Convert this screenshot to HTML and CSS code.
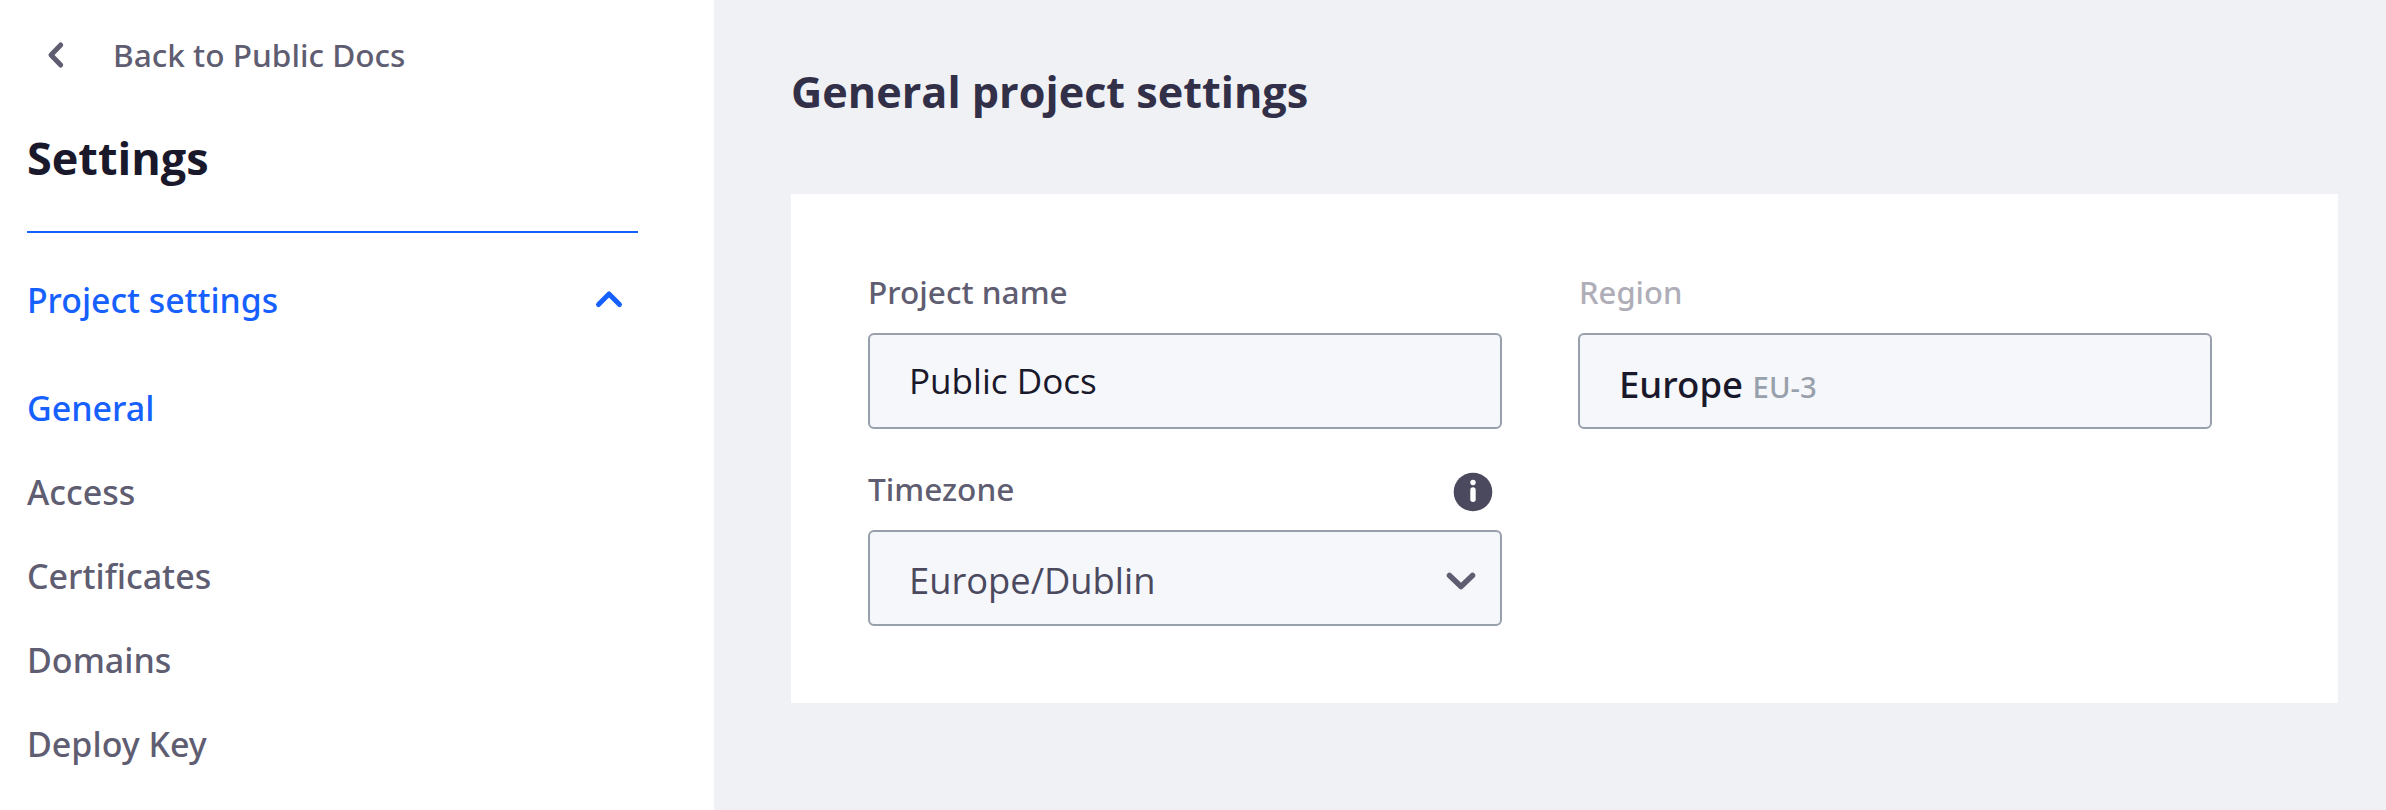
FILE: index.html
```html
<!DOCTYPE html>
<html lang="en">
<head>
<meta charset="utf-8">
<title>General project settings</title>
<link rel="stylesheet" href="styles.css">
</head>
<body>
<div class="layout">
  <aside class="sidebar">
    <a class="back">
      <svg class="back-icon" width="20" height="30" viewBox="0 0 20 30"><path d="M14.700 5 5 15l9.700 10" /></svg>
      <span>Back to Public Docs</span>
    </a>
    <h2 class="sidebar-title">Settings</h2>
    <nav class="nav">
      <div class="nav-group">
        <span>Project settings</span>
        <svg class="group-icon" width="30" height="24" viewBox="0 0 30 24"><path d="M4.500 17.500 15 7l10.500 10.500" /></svg>
      </div>
      <a class="nav-item active">General</a>
      <a class="nav-item">Access</a>
      <a class="nav-item">Certificates</a>
      <a class="nav-item">Domains</a>
      <a class="nav-item">Deploy Key</a>
    </nav>
  </aside>
  <main class="main">
    <h1 class="title">General project settings</h1>
    <section class="card">
      <div class="field">
        <div class="label">Project name</div>
        <div class="box name">Public Docs</div>
      </div>
      <div class="field">
        <div class="label muted">Region</div>
        <div class="box region"><span class="region-text">Europe <small>EU-3</small></span></div>
      </div>
      <div class="field">
        <div class="label">
          <span>Timezone</span>
          <svg class="info" width="40" height="40" viewBox="0 0 40 40"><circle class="disc" cx="20" cy="20" r="19.300"/><circle class="mark" cx="20" cy="10.500" r="2.700"/><path class="stem" d="M20 18v9.300"/></svg>
        </div>
        <div class="box select">
          <span>Europe/Dublin</span>
          <svg class="caret" width="32" height="24" viewBox="0 0 32 24"><path d="M4.500 7.500 16 18.500 27.500 7.500" /></svg>
        </div>
      </div>
    </section>
  </main>
</div>
</body>
</html>
```
FILE: styles.css
```css
* { box-sizing: border-box; }
body {
  margin: 0;
  font-family: "Noto Sans", "Open Sans", sans-serif;
  background: #f0f1f5;
  color: #5f5d71;
}
svg { display: block; fill: none; stroke-linecap: round; stroke-linejoin: round; }
.layout { display: flex; height: 810px; overflow: hidden; }

.sidebar { width: 714px; padding: 0 76px 0 27px; background: #fff; }
.back {
  display: flex;
  align-items: center;
  height: 110px;
  padding-left: 19px;
  font-size: 31.600px;
  font-weight: 500;
}
.back span { padding-bottom: 2px; }
.back-icon { margin-right: 47px; stroke: #5f5d71; stroke-width: 5; }
.sidebar-title {
  margin: 0;
  height: 123px;
  padding-top: 1px;
  line-height: 94px;
  border-bottom: 2px solid #1660ff;
  font-family: "Open Sans", sans-serif;
  font-size: 45px;
  font-weight: 700;
  color: #1a192b;
}
.nav { font-size: 34px; font-weight: 500; }
.nav-group {
  display: flex;
  align-items: center;
  justify-content: space-between;
  height: 132px;
  padding-right: 14px;
  font-size: 33.800px;
  color: #1660ff;
}
.nav-group span { padding-top: 1px; }
.group-icon { stroke: #1660ff; stroke-width: 5; }
.nav-item { display: block; height: 84px; line-height: 86px; }
.nav-item.active { color: #1660ff; }

.main { flex: 1; padding: 62px 48px 0 77px; }
.title {
  margin: 0 0 72px;
  line-height: 60px;
  font-family: "Open Sans", sans-serif;
  font-size: 43.200px;
  font-weight: 700;
  color: #323048;
}
.card {
  display: grid;
  grid-template-columns: 634px 634px;
  gap: 39px 76px;
  height: 509px;
  padding: 77px;
  align-content: start;
  background: #fff;
}
.label {
  display: flex;
  justify-content: space-between;
  height: 62px;
  padding-right: 9px;
  line-height: 42px;
  font-size: 31.600px;
  font-weight: 500;
}
.label.muted { padding-left: 1px; font-size: 31px; color: #afaeb8; }
.info { margin-top: 4px; }
.disc { fill: #4b495e; }
.mark { fill: #fff; }
.stem { stroke: #fff; stroke-width: 5.400; }
.box {
  display: flex;
  align-items: center;
  height: 96px;
  padding: 0 22px 0 39px;
  border: 2px solid #98a0ab;
  border-radius: 6px;
  background: #f5f7fb;
  font-size: 36.600px;
  color: #1a192b;
}
.name { padding-bottom: 2px; font-family: "Open Sans", sans-serif; font-size: 35.100px; }
.region { padding-top: 6px; font-weight: 500; }
.region small { font-size: 29.300px; color: #98a0ab; }
.select {
  justify-content: space-between;
  padding: 4px 23px 0 39px;
  font-family: "Open Sans", sans-serif;
  font-size: 36.300px;
  color: #4b495e;
}
.caret { stroke: #5f5d71; stroke-width: 5.500; }
```
